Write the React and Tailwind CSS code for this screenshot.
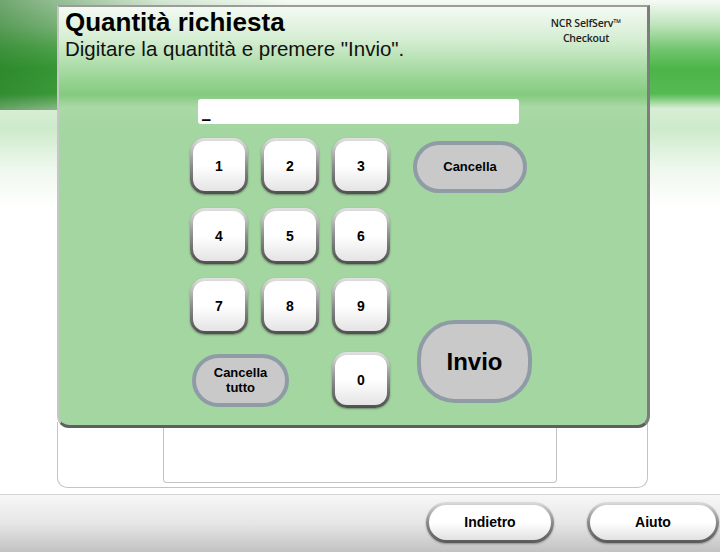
import React from 'react';

const font = { fontFamily: '"Liberation Sans", Arial, sans-serif' };

const DigitKey = ({ label }) => (
  <div className="w-[58px] h-[56px] rounded-[15px] p-[3px] bg-gradient-to-b from-[#e2e2e2] via-[#8c8c8c] to-[#4f4f4f] shadow-[0_1px_2px_rgba(0,0,0,0.35)]">
    <button className="w-full h-full rounded-[12px] bg-gradient-to-b from-white via-white to-[#e4e4e4] text-[14px] font-bold text-black flex items-center justify-center">
      {label}
    </button>
  </div>
);

const GrayKey = ({ children, className }) => (
  <button
    className={`bg-[#c9c9c9] border-[4px] border-[#8f9ca6] text-black font-bold flex items-center justify-center text-center ${className}`}
  >
    {children}
  </button>
);

const BarButton = ({ label, width }) => (
  <div className={`${width} h-[41px] rounded-full p-[3px] bg-gradient-to-b from-[#dcdcdc] via-[#8a8a8a] to-[#5a5a5a] shadow-[0_1px_2px_rgba(0,0,0,0.3)]`}>
    <button className="w-full h-full rounded-full bg-gradient-to-b from-white via-white to-[#e2e2e2] text-[14px] font-bold text-black flex items-center justify-center">
      {label}
    </button>
  </div>
);

export default function App() {
  return (
    <div className="w-[720px] h-[552px] overflow-hidden flex flex-col bg-white" style={font}>
      {/* Main area with green swoosh */}
      <div className="h-[494px] bg-no-repeat bg-[length:100%_110px,100%_100%] bg-[linear-gradient(90deg,rgba(25,110,25,0.6)_0%,rgba(25,110,25,0.15)_22%,rgba(25,110,25,0)_40%),linear-gradient(180deg,#f6fbf5_0%,#bfe4bc_5%,#72c56e_10%,#4cb449_14%,#56ba53_19%,#d8eed6_22%,#cdeacb_26%,#eef8ed_34%,#ffffff_42%)]">
        <div className="ml-[57px] w-[593px] pt-[5px] flex flex-col">
          {/* Dialog */}
          <div className="relative z-10 w-[593px] h-[423px] border-t-2 border-l-2 border-r-[3px] border-b-[3px] border-t-[#9c9c9c] border-l-[#c6c6c6] border-r-[#7d7d7d] border-b-[#5f5f5f] rounded-b-[12px] bg-[linear-gradient(180deg,#f4faf3_0%,#d4edd1_8%,#9bd596_17%,#84ca7f_21%,#aad9a6_24%,#a3d6a0_30%,#a3d6a0_100%)] flex flex-col">
            <div className="flex justify-between">
              <div className="pl-[6px]">
                <div className="text-[26px] font-bold text-black leading-[31px]">Quantità richiesta</div>
                <div className="text-[20.5px] text-[#111] leading-[22px]">Digitare la quantità e premere "Invio".</div>
              </div>
              <div
                className="w-[80px] mr-[21px] mt-[9px] text-center whitespace-nowrap text-[10.5px] font-semibold leading-[15px] tracking-[-0.2px] text-[#222]"
                style={{ fontFamily: '"Open Sans", sans-serif' }}
              >
                NCR SelfServ™<br />Checkout
              </div>
            </div>

            {/* Input field */}
            <div className="ml-[139px] mt-[39px] w-[321px] h-[25px] bg-white rounded-[3px] flex items-end pl-[4px] pb-[4px]">
              <span
                className="text-[17px] font-bold leading-[17px] text-black"
                style={{ fontFamily: '"DejaVu Sans", sans-serif' }}
              >
                _
              </span>
            </div>

            {/* Keypad */}
            <div className="ml-[131px] mt-[14px] flex">
              <div className="grid grid-cols-[58px_58px_58px] gap-x-[13px] gap-y-[14px]">
                {['1', '2', '3', '4', '5', '6', '7', '8', '9'].map((d) => (
                  <DigitKey key={d} label={d} />
                ))}
                <div className="col-span-2 flex items-center pl-[2px] pt-[4px]">
                  <GrayKey className="w-[97px] h-[53px] rounded-full text-[13px] leading-[15px]">
                    Cancella<br />tutto
                  </GrayKey>
                </div>
                <div className="pt-[4px]">
                  <DigitKey label="0" />
                </div>
              </div>
              <div className="ml-[23px] flex flex-col">
                <GrayKey className="mt-[3px] w-[114px] h-[52px] rounded-full text-[13px]">Cancella</GrayKey>
                <GrayKey className="mt-[127px] ml-[4px] w-[115px] h-[83px] rounded-[38px] text-[24px]">Invio</GrayKey>
              </div>
            </div>
          </div>

          {/* White panel below dialog */}
          <div className="-mt-[6px] w-[591px] h-[66px] bg-white border border-t-0 border-[#c4c4c4] rounded-b-[10px] flex">
            <div className="ml-[105px] w-[394px] h-[61px] border border-t-0 border-[#c4c4c4] rounded-b-[4px]" />
          </div>
        </div>
      </div>

      {/* Bottom bar */}
      <div className="h-[58px] border-t border-[#d6d6d6] bg-gradient-to-b from-[#f7f7f7] via-[#e6e6e6] to-[#c2c2c2] flex justify-end items-start pt-[7px] pr-[1px] gap-[33px]">
        <BarButton label="Indietro" width="w-[128px]" />
        <BarButton label="Aiuto" width="w-[132px]" />
      </div>
    </div>
  );
}
